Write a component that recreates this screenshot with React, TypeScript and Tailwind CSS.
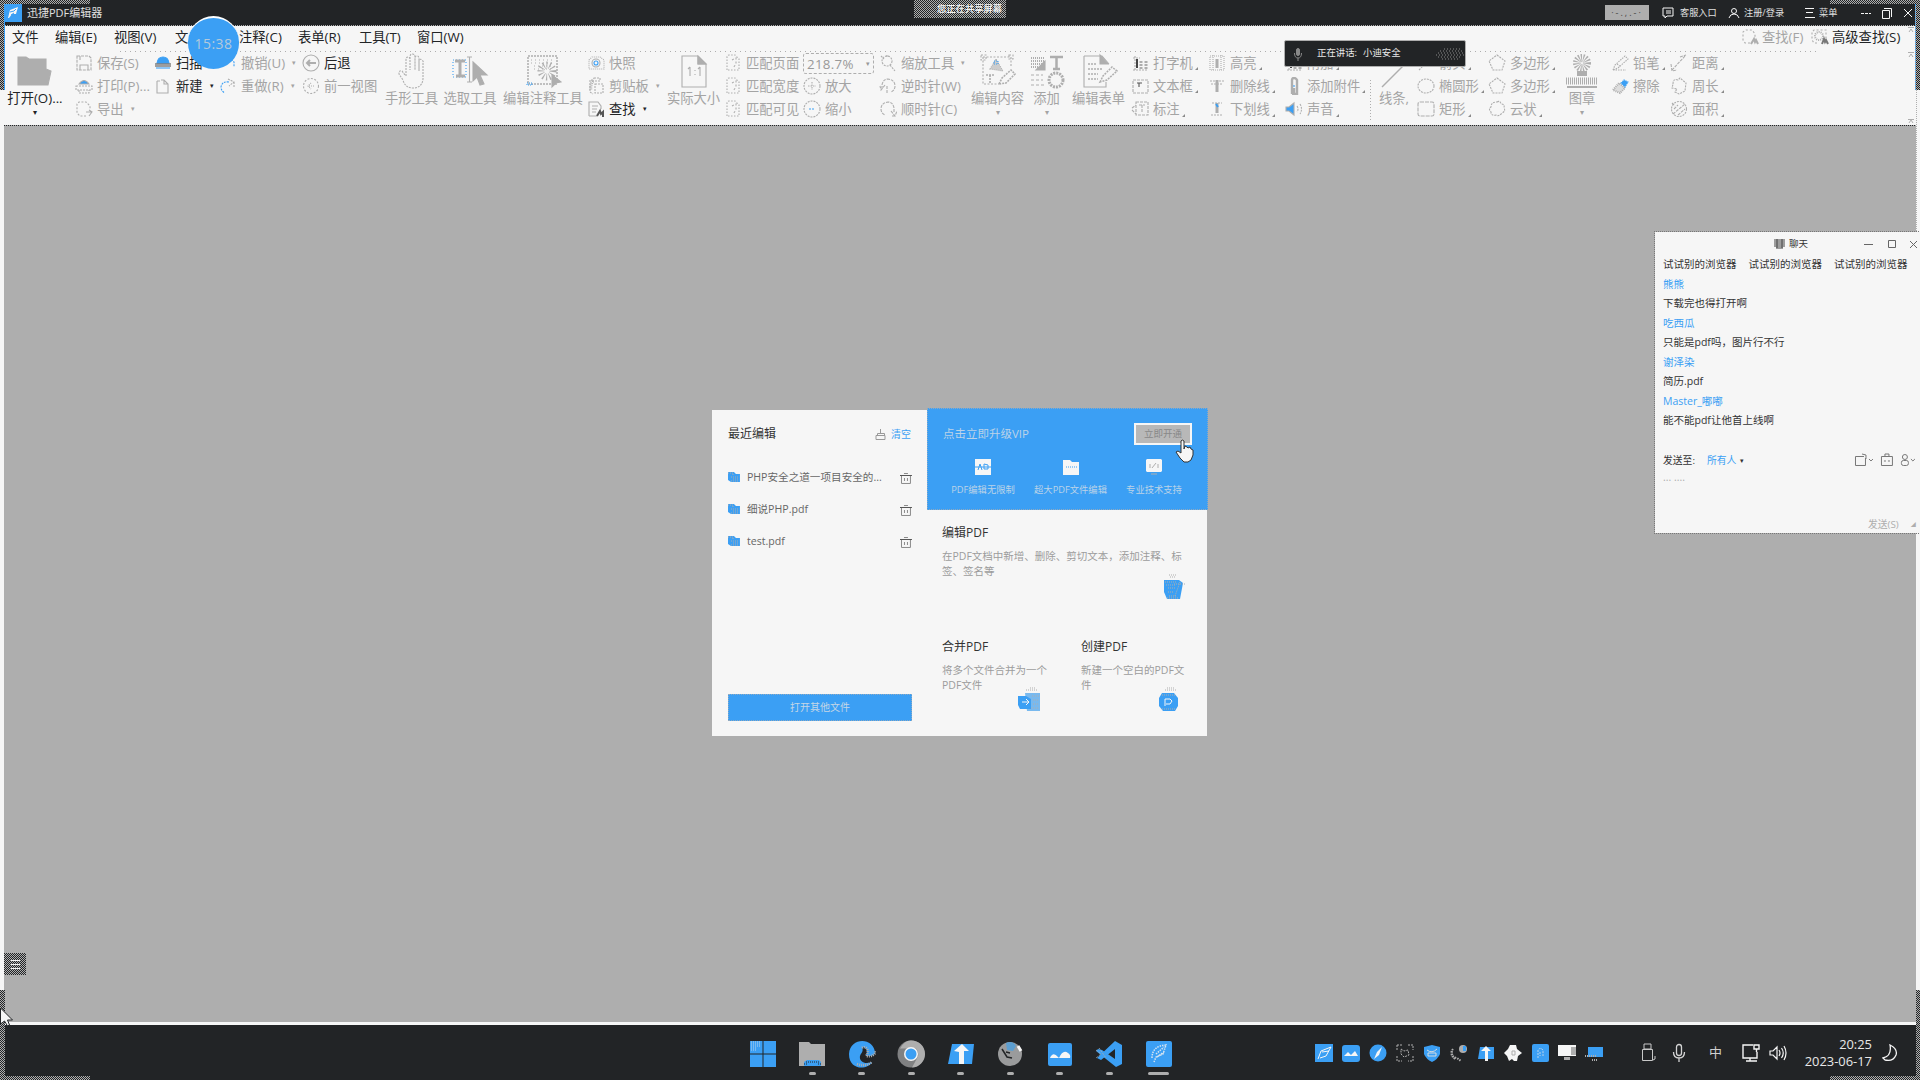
import type { ReactNode } from 'react';

const G = '#aeaeae';
const B = '#3b9ff4';
const D = '#222426';
const W = '#f6f6f6';

const CHECK = 'bg-[repeating-conic-gradient(#aeaeae_0_25%,#222426_0_50%)] bg-[length:2px_2px]';
const DOTS = 'bg-[repeating-linear-gradient(90deg,#222426_0_1px,#aeaeae_1px_2px)]';
const FAINT = 'bg-[repeating-linear-gradient(90deg,#aeaeae_0_1px,#f6f6f6_1px_5px)]';

const glyphs: Record<string, ReactNode> = {
  save: (<><path d="M2 2h12l2 2v12H2z" strokeDasharray="3 1" /><path d="M5 16v-5h8v5M5 2v4" /></>),
  print: (<><path d="M1 9h16v4H1zM4 13v3h10v-3" strokeDasharray="2 1" /><path d="M4 7q5-7 10 0z" fill={B} stroke={G} /></>),
  exp: (<><path d="M11 16H5l-3-3V4l2-2h7l4 4v3" strokeDasharray="2 1.5" /><path d="M11 12h6M14 10l3 2-3 4" /></>),
  scan: (<><path d="M3 9q1-6 6-6t6 6z" fill={B} stroke={B} /><path d="M1 10h16M1 12h16" stroke="#444" /><path d="M2 14h14" stroke={B} /></>),
  page: <path d="M3 4h3M3 4v12h11V7l-4-4H7M10 3v4h4" />,
  undo: <path d="M4 8q6-6 11 0v5M4 3v5h5" stroke={B} strokeDasharray="2 1" />,
  redo: (<><path d="M10 5q-7-1-8 5 0 4 4 6" strokeDasharray="2 1" stroke={B} /><path d="M9 2l6 3-5 4M15 5v5" strokeDasharray="2 1" /></>),
  back: (<><circle cx="9" cy="9" r="8" /><path d="M14 9H5M8 6L5 9l3 3" strokeWidth="2" /></>),
  prev: (<><circle cx="9" cy="9" r="7.5" strokeDasharray="2 1.5" /><path d="M12 9H6M9 6L6 9l3 3" strokeDasharray="1 1" /></>),
  camera: (<><path d="M2 6l3-3h8l4 3v9H2z" strokeDasharray="1 1" /><circle cx="9" cy="9" r="4" /><circle cx="9" cy="9" r="2" stroke={B} /></>),
  clip: (<><path d="M6 3H3v12l3 2M7 1h6v3H6zM8 7h8v9H8z" strokeDasharray="2 1" /><path d="M6 4q-3 4-2 9" strokeWidth="3" strokeDasharray="1 1" /></>),
  find: (<><path d="M2 16V2h9l3 4v3M5 6h6M5 9h5M5 12h4M2 16h8" /><path d="M10 16l3-5 1 3 2-2v5" stroke="#555" strokeWidth="2" /></>),
  pageSm: (<><path d="M3 16V3q0-2 2-2h6l4 4v11z" strokeDasharray="1.5 1.5" /><path d="M8 6l4-2v6l-3 4" strokeDasharray="2 2" /></>),
  plus: (<><circle cx="9" cy="9" r="8" strokeDasharray="2 1" /><path d="M5 9h8M9 5v8" strokeDasharray="1.5 1" /></>),
  minus: (<><circle cx="9" cy="9" r="8" strokeDasharray="2 1" /><path d="M6 9h6" stroke={B} strokeDasharray="2 1" /></>),
  zoom: (<><circle cx="8" cy="7" r="5" strokeDasharray="2 1" /><path d="M11 11l5 6M8 1v3M2 2l3 3" strokeDasharray="2 1" /></>),
  ccw: <path d="M3 12V8q1-6 6-6 7 1 7 7 0 4-4 6M6 8l-4 5-1-4M8 9v7" strokeDasharray="3 1" />,
  cw: <path d="M15 12V8q-1-6-6-6-7 1-7 7 0 4 4 6M12 11l4 5 2-5M13 16h4" strokeDasharray="3 1" />,
  type: (<><path d="M4 2v14M2 4h7M2 16h15" strokeDasharray="2 1" /><path d="M6 5v9" stroke="#444" strokeWidth="2" /><path d="M10 7v9M15 7v9" strokeWidth="3" strokeDasharray="2 1" /></>),
  textbox: (<><path d="M2 3h15v13H2z" strokeDasharray="3 1" /><path d="M6 6h5M8 6v4" stroke="#555" /></>),
  callout: <path d="M5 2h12v13H5zM1 8l4-3M1 10l4 4M8 5h6M11 5v7" strokeDasharray="3 1" />,
  high: (<><path d="M2 2h14v14H2zM5 1v16M13 1v16" strokeDasharray="1 1" /><path d="M9 5v9" stroke={G} strokeWidth="3" /></>),
  strike: (<><path d="M2 4h14M3 7h12" strokeDasharray="2 1" /><path d="M9 3v12" strokeWidth="3" /></>),
  under: (<><path d="M4 3h10M3 15h12" strokeDasharray="2 1" /><path d="M9 3v10" strokeWidth="3" /><path d="M8 4l2 3" stroke={B} strokeWidth="2" /></>),
  attach: (<><path d="M7 17V3q0-2 2-2t3 2v14H7M9 11v5" strokeWidth="2.4" /><path d="M9 8v2" stroke={B} /></>),
  sound: (<><path d="M1 7h3l5-4v12l-5-4H1z" fill={B} stroke={G} /><path d="M12 6q2 3 0 6M15 4q3 5 0 10" strokeDasharray="2 1" /></>),
  arrow: <path d="M2 16L15 3M10 3h5v5" strokeDasharray="2 1" />,
  ellipse: <ellipse cx="9" cy="9" rx="8" ry="7" strokeDasharray="2 1" />,
  rect: <rect x="1" y="2" width="16" height="14" rx="2" strokeDasharray="4 1" />,
  poly: <path d="M9 1l8 6-3 9H5L1 7z" strokeDasharray="2 1" />,
  cloud: <path d="M9 2q3-2 4 2 4 0 3 4 2 3-2 5-3 4-6 2-5 1-5-3-3-3 0-5 0-5 6-5z" strokeDasharray="2 1" />,
  pencil: <path d="M2 16l2-5L14 2l3 3L7 14zM2 16h13M6 10l4 3" strokeDasharray="1.5 1" />,
  erase: (<><path d="M2 13l6-7 6 5-5 5z" strokeDasharray="1 1" strokeWidth="2" fill="#ddd" /><path d="M10 6l3-3 4 2-3 5z" fill={B} stroke={B} strokeDasharray="1 1" /></>),
  dist: <path d="M2 16L15 2M10 3l6-2M1 10l1 7 5-1" strokeDasharray="3 1" />,
  perim: <path d="M3 7q0-6 5-4l2-2 6 5-1 8-6 3-4-2 2-3-5-1z" strokeDasharray="2 1" />,
  area: (<><circle cx="9" cy="9" r="7.5" strokeDasharray="2 1" /><path d="M3 14L15 4M4 9l4-4M8 15l7-6M2 3l3 3" strokeDasharray="3 1" /></>),
  search: (<><path d="M9 15H4l-2-3V4l3-2h6l3 4v4" strokeDasharray="2 2" /><path d="M10 16l3-5 1 3 1-2 2 4" strokeWidth="2" /></>),
  search2: (<><path d="M6 15H3l-2-3V4l2-2h12v8" strokeDasharray="2 2" /><circle cx="8" cy="8" r="4" strokeWidth="2" strokeDasharray="1 1" /><path d="M11 16l2-5 1 3 1-2 2 4" strokeWidth="2" stroke="#777" /></>),
};

function Icon({ n }: { n: string }) {
  return (
    <svg viewBox="0 0 18 18" className="h-[18px] w-[18px] shrink-0" fill="none" stroke={G} strokeWidth="1.1">
      {glyphs[n]}
    </svg>
  );
}

type Row = { i: string; t: string; on?: boolean; m?: string; c?: boolean };

function Column({ w, rows }: { w: string; rows: (Row | null)[] }) {
  return (
    <div className={`flex shrink-0 flex-col ${w}`}>
      {rows.map((r, k) =>
        r ? (
          <div key={k} className={`flex h-[23.3px] items-center whitespace-nowrap ${r.on ? 'text-[#222426]' : 'text-[#a4a4a4]'}`}>
            <Icon n={r.i} />
            <span className="ml-[4px]">{r.t}</span>
            {r.m && <span className={r.m}>▾</span>}
            {r.c && <i className="mt-[12px] ml-[2px] h-0 w-0 border-b-[3px] border-l-[3px] border-b-[#8a8a8a] border-l-transparent" />}
          </div>
        ) : (
          <div key={k} className="h-[23.3px]" />
        ),
      )}
    </div>
  );
}

function Big({ w, label, on, caret, children }: { w: string; label: string; on?: boolean; caret?: boolean; children: ReactNode }) {
  return (
    <div className={`flex shrink-0 flex-col items-center pt-[1px] whitespace-nowrap ${w} ${on ? 'text-[#222426]' : 'text-[#a4a4a4]'}`}>
      <svg viewBox="0 0 38 38" className="h-[38px] w-[38px]" fill="none" stroke={G} strokeWidth="1.1">
        {children}
      </svg>
      <span className="mt-[-1px] h-[18px] leading-[18px]">{label}</span>
      {caret && <span className="mt-[-1px] text-[8px] leading-[12px]">▾</span>}
    </div>
  );
}

const dd = 'ml-[7px] text-[7px]';

function Ribbon() {
  return (
    <div className="-mt-[1px] flex h-[73px] text-[13.3px] leading-[18px]">
      <Big w="w-[70px]" label="打开(O)..." on caret>
        <path d="M2 5h8l3 2h17v10l5 2-3 14H2z" fill={G} />
      </Big>
      <Column w="ml-[5px] w-[79px]" rows={[{ i: 'save', t: '保存(S)' }, { i: 'print', t: '打印(P)...' }, { i: 'exp', t: '导出', m: dd }]} />
      <Column w="w-[65px]" rows={[{ i: 'scan', t: '扫描', on: true }, { i: 'page', t: '新建', on: true, m: dd }]} />
      <Column w="w-[83px]" rows={[{ i: 'undo', t: '撤销(U)', m: dd }, { i: 'redo', t: '重做(R)', m: dd }]} />
      <Column w="w-[80px]" rows={[{ i: 'back', t: '后退', on: true }, { i: 'prev', t: '前一视图' }]} />
      <Big w="w-[59px]" label="手形工具">
        <path d="M13 24V8q0-3 2-3t2 3v10V5q0-3 2.500-3T22 5v13V6q0-2 2-2t2 3v12V9q1-3 3-1t1 3v16q-1 9-10 9-8 0-10-8l-4-6q0-4 3-3l3 4" strokeDasharray="2 1" />
      </Big>
      <Big w="w-[58px]" label="选取工具">
        <path d="M2 8h13v17H2z" stroke={B} strokeDasharray="1 2" />
        <path d="M4 9h10M9 9v15M5 24h9" strokeWidth="3" />
        <path d="M16 5h5M16 30h5M18.500 5v25" />
        <path d="M22 10l14 13h-7l4 9-4 1-3-8-4 4z" fill={G} />
      </Big>
      <Big w="w-[88px]" label="编辑注释工具">
        <path d="M4 4h29v28H4z" strokeDasharray="2 1" strokeWidth="1.500" />
        <path d="M7 8h22M7 11h22M10 14h19M10 17h19" strokeDasharray="1 3" />
        <circle cx="23" cy="19" r="6" strokeWidth="7" strokeDasharray="1 2" />
        <path d="M28 23l9 7-5 1-4 4z" fill={G} />
        <path d="M3 31h5v2H3z" stroke={B} strokeDasharray="1 1" />
      </Big>
      <Column w="w-[76px]" rows={[{ i: 'camera', t: '快照' }, { i: 'clip', t: '剪贴板', m: dd }, { i: 'find', t: '查找', on: true, m: dd }]} />
      <Big w="w-[61px]" label="实际大小">
        <path d="M7 4h16l8 8v23H7zM23 4v8h8M15 15v9M13 17l2-2M25 15v9M23 17l2-2" />
        <path d="M23 4v8h8z" fill={G} />
        <path d="M20 18v1M20 22v1" />
      </Big>
      <Column w="w-[79px]" rows={[{ i: 'pageSm', t: '匹配页面' }, { i: 'pageSm', t: '匹配宽度' }, { i: 'pageSm', t: '匹配可见' }]} />
      <div className="flex w-[76px] shrink-0 flex-col">
        <div className="mt-[2px] flex h-[21px] w-[71px] items-center justify-between rounded-[3px] border border-dashed border-[#aeaeae] px-[3px] text-[13.3px] tracking-[0.3px] text-[#999]">
          218.7%<span className="text-[7px]">▾</span>
        </div>
        <Column w="w-[70px]" rows={[{ i: 'plus', t: '放大' }, { i: 'minus', t: '缩小' }]} />
      </div>
      <Column w="w-[89px]" rows={[{ i: 'zoom', t: '缩放工具', m: dd }, { i: 'ccw', t: '逆时针(W)' }, { i: 'cw', t: '顺时针(C)' }]} />
      <Big w="w-[59px]" label="编辑内容" caret>
        <path d="M4 5h28v10M4 5v27h16M2 3h5v5H2zM30 3h4v4h-4z" strokeDasharray="2 1.500" />
        <path d="M11 17l6-10 7 12z" fill="#ccc" strokeDasharray="1 1" />
        <path d="M15 9h4v3h-4z" stroke={B} strokeDasharray="1 1" />
        <path d="M7 23h9M11 23v9M20 32l3-6 9-8 4 4-9 9z" strokeWidth="1.600" strokeDasharray="2 1" />
      </Big>
      <Big w="w-[39px]" label="添加" caret>
        <path d="M3 6h14M3 9h14M3 12h14M3 15h14" strokeWidth="2" strokeDasharray="1 1" />
        <path d="M8 18l9-9v9z" fill={G} />
        <path d="M22 5h13M28.500 5v12M25 17h7" strokeWidth="2.500" />
        <path d="M3 23h12M3 28h12M3 33h14" strokeDasharray="3 2" />
        <circle cx="28" cy="28" r="7" strokeWidth="3" strokeDasharray="2 1" />
      </Big>
      <Big w="w-[65px]" label="编辑表单">
        <path d="M4 4h18l7 8M4 4v31h22v-5" />
        <path d="M20 3v9h8z" fill={G} />
        <path d="M8 12h9M8 17h15M8 22h10M8 27h10M20 30l3-6 9-9 5 4-10 9z" strokeDasharray="2 1" strokeWidth="1.500" />
      </Big>
      <Column w="w-[77px]" rows={[{ i: 'type', t: '打字机', c: true }, { i: 'textbox', t: '文本框', c: true }, { i: 'callout', t: '标注', c: true }]} />
      <Column w="w-[77px]" rows={[{ i: 'high', t: '高亮', c: true }, { i: 'strike', t: '删除线', c: true }, { i: 'under', t: '下划线', c: true }]} />
      <Column w="w-[85px]" rows={[{ i: 'type', t: '附加', c: true }, { i: 'attach', t: '添加附件', c: true }, { i: 'sound', t: '声音', c: true }]} />
      <div className="mt-[29px] h-[41px] w-px shrink-0 bg-[repeating-linear-gradient(180deg,#aeaeae_0_1px,#f6f6f6_1px_3px)]" />
      <Big w="w-[46px]" label="线条,">
        <path d="M7 35L30 12" strokeWidth="1.400" />
      </Big>
      <Column w="w-[71px]" rows={[{ i: 'arrow', t: '箭头', c: true }, { i: 'ellipse', t: '椭圆形', c: true }, { i: 'rect', t: '矩形', c: true }]} />
      <Column w="w-[75px]" rows={[{ i: 'poly', t: '多边形', c: true }, { i: 'poly', t: '多边形', c: true }, { i: 'cloud', t: '云状', c: true }]} />
      <Big w="w-[38px]" label="图章" caret>
        <circle cx="19" cy="11" r="5" strokeWidth="8" strokeDasharray="1 1" />
        <path d="M19 19v5" strokeWidth="10" />
        <path d="M3 29h32" strokeWidth="7" strokeDasharray="1 1" />
        <path d="M4 35h30" strokeWidth="2" />
      </Big>
      <div className="w-[10px] shrink-0" />
      <Column w="w-[59px]" rows={[{ i: 'pencil', t: '铅笔', c: true }, { i: 'erase', t: '擦除' }]} />
      <Column w="w-[80px]" rows={[{ i: 'dist', t: '距离', c: true }, { i: 'perim', t: '周长', c: true }, { i: 'area', t: '面积', c: true }]} />
    </div>
  );
}

const menus = [
  { t: '文件', w: 'w-[43px]' },
  { t: '编辑(E)', w: 'w-[59px]' },
  { t: '视图(V)', w: 'w-[61px]' },
  { t: '文', w: 'w-[64px]' },
  { t: '注释(C)', w: 'w-[59px]' },
  { t: '表单(R)', w: 'w-[61px]' },
  { t: '工具(T)', w: 'w-[58px]' },
  { t: '窗口(W)', w: 'w-[60px]' },
];

function TitleBar() {
  return (
    <header className="flex h-[25px] shrink-0 items-center bg-[#222426] pl-[4px] text-[11px] leading-[16px] text-[#e0e0e0]">
      <svg viewBox="0 0 18 18" className="h-[18px] w-[18px]">
        <rect width="18" height="18" fill={B} />
        <path d="M4 14l2-8 8-3-2 7H8l-3 4z" fill={W} />
        <path d="M6 8l4-1 2-2M7 11l3-2" stroke={B} fill="none" />
      </svg>
      <span className="ml-[5px] w-[1578px]">迅捷PDF编辑器</span>
      <span className="h-[15px] w-[44px] bg-[#aeaeae] text-center text-[9px] leading-[15px] tracking-[2px] text-[#444]">·-.,.-·</span>
      <svg viewBox="0 0 12 12" className="ml-[13px] h-[12px] w-[12px]" fill="none" stroke={W}>
        <path d="M1 1h10v8H5l-2 2V9H1zM4 4h5M4 6h5" />
      </svg>
      <span className="ml-[6px] w-[48px] whitespace-nowrap text-[9.2px]">客服入口</span>
      <svg viewBox="0 0 12 12" className="h-[12px] w-[12px]" fill="none" stroke={W}>
        <circle cx="6" cy="4" r="2.500" />
        <path d="M1 11q1-4 5-4t5 4" />
      </svg>
      <span className="ml-[4px] w-[60px] whitespace-nowrap text-[9.2px]">注册/登录</span>
      <svg viewBox="0 0 12 12" className="h-[12px] w-[12px]" fill="none" stroke={W}>
        <path d="M1 1.500h9M2 5.500h7M1 10.500h10" />
      </svg>
      <span className="ml-[3px] w-[40px] text-[9.2px]">菜单</span>
      <svg viewBox="0 0 58 14" className="h-[14px] w-[58px]" fill="none" stroke={W}>
        <path d="M2 7.500h10" strokeDasharray="3 1" />
        <path d="M23.500 4.500h7v8h-7zM25 2.500h7.500V11M45 3l8 8M53 3l-8 8" />
      </svg>
    </header>
  );
}

function MenuBar() {
  return (
    <nav className="flex h-[25px] items-center pb-[3px] pl-[12px] text-[13.3px] leading-[18px] text-[#222426]">
      {menus.map((m) => (
        <span key={m.t} className={`shrink-0 whitespace-nowrap ${m.w}`}>{m.t}</span>
      ))}
      <div className="ml-[1264px] flex shrink-0 items-center whitespace-nowrap">
        <Icon n="search" />
        <span className="ml-[3px] w-[49px] text-[#a4a4a4]">查找(F)</span>
        <Icon n="search2" />
        <span className="ml-[3px]">高级查找(S)</span>
      </div>
    </nav>
  );
}

function Trash() {
  return (
    <svg viewBox="0 0 12 12" className="h-[12px] w-[12px]" fill="none" stroke="#8a8a8a">
      <path d="M4 1.500h4M1.500 4v7.500h9V4M4.500 6v3M7.500 6v3" />
      <path d="M0 3.500h12" stroke="#555" />
    </svg>
  );
}

function RecentPanel() {
  return (
    <section className="flex w-[215px] flex-col pr-[15px] pl-[16px]">
      <div className="mt-[14px] flex h-[20px] items-center">
        <h2 className="w-[147px] text-[12px] leading-[20px] text-[#333]">最近编辑</h2>
        <svg viewBox="0 0 11 12" className="h-[12px] w-[11px]" fill="none" stroke="#999">
          <path d="M5.500 1v5M2.500 5.500h7v2h-7zM1 7.500h9v4H1z" />
        </svg>
        <span className="ml-[5px] text-[10px] text-[#3b9ff4]">清空</span>
      </div>
      <ul className="mt-[18px]">
        {['PHP安全之道一项目安全的...', '细说PHP.pdf', 'test.pdf'].map((f) => (
          <li key={f} className="flex h-[32px] items-center">
            <svg viewBox="0 0 12 12" className="h-[12px] w-[12px]">
              <path d="M0 0h6l2 2h4v8H3L0 8z" fill={B} />
              <path d="M0 1h5v2M3 5h8M5 7h6M3 9h8" stroke={G} strokeDasharray="1 1" fill="none" />
            </svg>
            <span className="ml-[7px] w-[154px] whitespace-nowrap text-[10.600px] text-[#666]">{f}</span>
            <Trash />
          </li>
        ))}
      </ul>
      <button className="mt-auto mb-[15px] h-[27px] w-[184px] border border-dotted border-[#8fa9c0] bg-[#3b9ff4] text-[10px] text-[#c4d6e6]">打开其他文件</button>
    </section>
  );
}

function Feature({ w, label, children }: { w: string; label: string; children: ReactNode }) {
  return (
    <div className={`flex shrink-0 flex-col items-center whitespace-nowrap text-[9.300px] leading-[12px] text-[#bcd3e8] ${w}`}>
      <svg viewBox="0 0 18 18" className="mb-[8px] h-[18px] w-[18px]">{children}</svg>
      {label}
    </div>
  );
}

function VipBanner() {
  return (
    <div className="relative -mt-[2px] h-[102px] w-[281px] border border-dotted border-[#8fa9c0] bg-[#3b9ff4]">
      <div className="mt-[14px] flex items-center pl-[15px]">
        <span className="w-[191px] text-[11.500px] leading-[16px] text-[#bcd3e8]">点击立即升级VIP</span>
        <span className="h-[22px] w-[58px] border-2 border-[#f6f6f6] bg-[#b8b8b8] text-center text-[9.500px] leading-[17px] text-[#888]">立即开通</span>
      </div>
      <div className="mt-[13px] flex pl-[16px]">
        <Feature w="w-[78px]" label="PDF编辑无限制">
          <path d="M1 1h16v16H1z" fill={W} />
          <path d="M1 9h16M4 12l2-6 2 6M10 6v5h4V7z" stroke={B} fill="none" />
        </Feature>
        <Feature w="w-[97px]" label="超大PDF文件编辑">
          <path d="M1 2h7l2 2h7v13H1z" fill={W} />
          <path d="M4 9h11" stroke={B} strokeDasharray="1 1" />
        </Feature>
        <Feature w="w-[70px]" label="专业技术支持">
          <path d="M2 1h14l1 1v11l-1 1H2l-1-1V2z" fill={W} />
          <path d="M5 6v4M7 10l4-5M13 6v4M6 16h6" stroke={G} />
        </Feature>
      </div>
      <svg viewBox="0 0 20 24" className="absolute top-[30px] left-[247px] h-[24px] w-[20px]" fill={W} stroke="#333">
        <path d="M6 14V2q1-2 3 0v8l1-3 2 1 1 1 2-1 1 2 2 1v5l-2 5-3 2H9l-4-4-4-6 2-1z" />
      </svg>
    </div>
  );
}

function Card({ w, title, text, tw, icon }: { w: string; title: string; text: string; tw: string; icon: ReactNode }) {
  return (
    <div className={`flex shrink-0 flex-col ${w}`}>
      <h3 className="text-[12px] leading-[18px] text-[#333]">{title}</h3>
      <p className={`mt-[7px] text-[10.500px] leading-[15.300px] text-[#9c9c9c] ${tw}`}>{text}</p>
      {icon}
    </div>
  );
}

function StartDialog() {
  return (
    <main className="flex h-[326px] w-[495px] shrink-0 bg-[#f6f6f6]">
      <RecentPanel />
      <section className="flex flex-col">
        <VipBanner />
        <div className="flex h-[116px] pt-[14px] pl-[15px]">
          <Card
            w="w-[250px]"
            tw="w-[245px]"
            title="编辑PDF"
            text="在PDF文档中新增、删除、剪切文本，添加注释、标签、签名等"
            icon={
              <svg viewBox="0 0 24 30" className="-mt-[8px] ml-[220px] h-[30px] w-[24px]">
                <path d="M2 8h15l4 3-3 16H5L2 20z" fill={B} />
                <path d="M7 3h8M8 5h6M12 12h11M18 10l-5 14M6 16h7M6 20h5M7 24h7M3 10h12M4 13h9M5 26h11" stroke={G} strokeDasharray="1 1" />
              </svg>
            }
          />
        </div>
        <div className="flex pt-[12px] pl-[15px]">
          <Card
            w="w-[139px]"
            tw="w-[108px]"
            title="合并PDF"
            text="将多个文件合并为一个PDF文件"
            icon={
              <svg viewBox="0 0 26 28" className="-mt-[9px] ml-[76px] h-[28px] w-[26px]">
                <path d="M7 8h15v18H9z" fill="#79b9ee" />
                <path d="M0 11h8l5 3v10H2l-2-4z" fill={B} />
                <path d="M4 17h6M8 14l3 3-3 3" stroke={W} fill="none" />
                <path d="M8 5h12M12 3h6M14 11h7M15 15h6M15 19h6M13 23h8" stroke={G} strokeDasharray="1 1" />
              </svg>
            }
          />
          <Card
            w="w-[115px]"
            tw="w-[106px]"
            title="创建PDF"
            text="新建一个空白的PDF文件"
            icon={
              <svg viewBox="0 0 26 28" className="-mt-[9px] ml-[76px] h-[28px] w-[26px]">
                <path d="M5 8h12l4 5v8l-3 5H6l-4-5v-8z" fill={B} />
                <path d="M8 21v-7h5l2 2-2 3H9" stroke={W} fill="none" />
                <path d="M8 5h12M10 3h8M5 24h14M5 10h13" stroke={G} strokeDasharray="1 1" />
              </svg>
            }
          />
        </div>
      </section>
    </main>
  );
}

const chat = [
  { t: '熊熊', n: true },
  { t: '下载完也得打开啊' },
  { t: '吃西瓜', n: true },
  { t: '只能是pdf吗，图片行不行' },
  { t: '谢泽染', n: true },
  { t: '简历.pdf' },
  { t: 'Master_嘟嘟', n: true },
  { t: '能不能pdf让他首上线啊' },
];

function Chat() {
  return (
    <aside className="absolute top-[232px] left-[1655px] flex h-[301px] w-[265px] flex-col overflow-hidden bg-[#f6f6f6] pl-[8px] text-[10.500px] leading-[19.500px] whitespace-nowrap text-[#333] outline outline-dotted outline-[#777]">
      <div className="flex h-[23px] shrink-0 items-center pl-[111px]">
        <svg viewBox="0 0 11 10" className="h-[10px] w-[11px]" stroke="#444" fill="none">
          <path d="M0 1h11M0 3h11M0 5h11M0 7h11M2 9h7M3 0v9M8 0v9" />
        </svg>
        <span className="ml-[4px] w-[75px] text-[9.500px]">聊天</span>
        <svg viewBox="0 0 54 10" className="h-[10px] w-[54px]" stroke="#666" fill="none">
          <path d="M0 5.500h9M24.500 1.500h7v7h-7zM46 2l7 7M53 2l-7 7" />
        </svg>
      </div>
      <div className="flex shrink-0 gap-[12px]">
        <span>试试别的浏览器</span>
        <span>试试别的浏览器</span>
        <span>试试别的浏览器</span>
      </div>
      {chat.map((c) => (
        <p key={c.t} className={`shrink-0 ${c.n ? 'text-[#3b9ff4]' : ''}`}>{c.t}</p>
      ))}
      <div className="mt-[20px] flex shrink-0 items-center text-[9.800px]">
        <span className="w-[44px]">发送至:</span>
        <span className="text-[#3b9ff4]">所有人</span>
        <span className="ml-[4px] w-[114px] text-[7px]">▾</span>
        <svg viewBox="0 0 66 14" className="h-[14px] w-[66px]" fill="none" stroke="#777">
          <path d="M10 3.500H1.500v9h10V5M8 1l4 1v4M15 6l2 2 2-2M27.500 3.500h11v9h-11zM31 3V1h4v2M30 8h2M34 8h2M57 6l2 2 2-2" />
          <circle cx="51" cy="4" r="2.500" />
          <rect x="47.500" y="7.500" width="7" height="5" rx="2" />
        </svg>
      </div>
      <span className="leading-[14px] text-[#aeaeae]">... ....</span>
      <div className="mt-auto flex h-[17px] items-center pl-[205px] text-[9.800px] text-[#aeaeae]">
        发送(S)<span className="ml-[12px] text-[5px]">◢</span>
      </div>
    </aside>
  );
}

const apps: { bar: string; d: ReactNode }[] = [
  { bar: '', d: (<><path d="M1 1h12.500v12.500H1zM14.500 1H27v12.500H14.500zM1 14.500h12.500V27H1zM14.500 14.500H27V27H14.500z" fill={B} /><path d="M2 2h10M2 4h9M2 6h9M2 8h6M2 10h5" stroke="#b9d4ec" strokeDasharray="1 1" /></>) },
  { bar: 'w-[7px]', d: (<><path d="M1 2h10l2 2h14v22H1z" fill={G} /><path d="M6 26v-4l3-2h12l2 2v4z" fill={B} /><path d="M8 22h14M6 24h3M20 24h3" stroke={D} strokeDasharray="1 1" /></>) },
  { bar: 'w-[7px]', d: (<><path d="M27 13C26-3 2-3 1 14c0 17 19 16 23 8-8 3-13-1-12-6 1-3 4-5 2-8 3-2 5 1 5 4l-1 3c3 2 8 1 9-2z" fill={B} /><path d="M14 8c4-3 8 3 4 8 5 1 10-1 9-5M9 24q9 3 15-2" stroke={G} strokeWidth="2.500" strokeDasharray="1 1" fill="none" /></>) },
  { bar: 'w-[7px]', d: (<><circle cx="14" cy="14" r="13.500" fill="#808182" /><path d="M14 .5A13.500 13.500 0 0 1 15 27.500l6-11q1-5-2-8H3Q8 0 14 .5" fill={G} /><circle cx="14" cy="14" r="7" fill={W} /><circle cx="14" cy="14" r="5.500" fill={B} /></>) },
  { bar: 'w-[7px]', d: (<><path d="M5 4h22l-2 20H1z" fill={B} /><path d="M7 11l8-7 7 7h-5v13h-5V12z" fill={W} /></>) },
  { bar: 'w-[7px]', d: (<><circle cx="14" cy="14" r="12" fill="#9a9b9c" /><path d="M10 3q7-3 10 3l-3 5-6-1z" fill="#5c9ed0" /><path d="M6 9l5 8 5 1M10 12l4 1" stroke={D} strokeWidth="1.500" fill="none" /><path d="M22 6l3 5" stroke={W} strokeWidth="3" /></>) },
  { bar: 'w-[7px]', d: (<><rect x="2" y="3" width="24" height="23" rx="2" fill={B} /><path d="M4 18q3-7 8-1l1 1q4-9 9-5 3 2 2 5z" fill={W} /></>) },
  { bar: 'w-[7px]', d: (<><path d="M20 1l7 4v19l-6 3L1 11l2-2 4 1 13 9V9L6 20l-4-2z" fill={B} /><path d="M1 10l5 4-5 4M4 8l7 10" stroke={G} strokeDasharray="1 1" fill="none" /></>) },
  { bar: 'w-[21px]', d: (<><rect x="1" y="1" width="26" height="26" rx="2" fill={B} /><path d="M7 18q0-12 14-13l-3 9-7 3-2 5M11 14l8-7M12 17l7-5" stroke="#d5e4f1" strokeWidth="1.500" strokeDasharray="1.500 1" fill="none" /></>) },
];

const tray: ReactNode[] = [
  (<><rect x="0" y="0" width="18" height="18" fill={B} /><path d="M3 15l3-8 10-4-5 9-6 2M7 8l7-1" stroke={W} fill="none" /></>),
  (<><rect x="0" y="1" width="18" height="17" rx="3" fill={B} /><path d="M2 12l4-4 3 3 4-4 3 5z" fill={W} /></>),
  (<><circle cx="9" cy="9" r="8.500" fill={B} /><path d="M5 15l3-7 5-5-3 8z" fill={W} /></>),
  (<><path d="M1 1h5M12 1h5v5M1 1v6M1 12v5h5M17 12v5h-5M5 5l3 2 4-1 1 5-5 2-3-3z" stroke={G} fill="none" strokeDasharray="2 1" /></>),
  (<><path d="M1 3l8-2 8 2v7q-2 5-8 8-6-3-8-8z" fill={B} /><path d="M4 6q5 4 10-1M5 9h8v3H5z" stroke="#d4dce2" fill="none" /></>),
  (<><path d="M2 7q-1 6 5 7l4 3M3 5q-4 5 2 10" stroke={G} strokeWidth="2" strokeDasharray="1.500 1" fill="none" /><circle cx="13" cy="5" r="4" fill={G} /><path d="M13 2h3v5h-3z" fill={B} /></>),
  (<><path d="M3 3h14v12H1z" fill={B} /><path d="M4 7l5-5 5 5h-3v10H8V7z" fill={W} /></>),
  (<><path d="M6 1h6l1 4 5 4-4 3-1 5h-3l-2-2-3 2-2-5-3-3 4-4z" fill={W} /><path d="M8 7h3v4H8z" stroke={G} fill="none" /></>),
  (<><rect x="1" y="0" width="17" height="18" rx="2" fill={B} /><path d="M7 14V6q2-3 5 0v6M9 8v4" stroke="#b9d4ec" fill="none" strokeDasharray="2 1" /></>),
  (<><path d="M0 1h18v11H0z" fill={W} /><path d="M13 3h5v8h-5zM6 13h6v3H6z" fill={G} /></>),
  (<><path d="M3 3h15v10H3z" fill={B} /><path d="M0 12h12M7 16h6" stroke={G} strokeWidth="2" strokeDasharray="1 1" /></>),
];

function Taskbar() {
  return (
    <footer className="flex h-[55px] shrink-0 bg-[#222426] text-[#e8e8e8]">
      <div className="flex pl-[738px]">
        {apps.map((a, k) => (
          <div key={k} className="flex w-[49.500px] flex-col items-center pt-[15px]">
            <svg viewBox="0 0 28 28" className="h-[28px] w-[28px]">{a.d}</svg>
            <span className={`mt-[4px] h-[3px] rounded-full bg-[#aeaeae] ${a.bar}`} />
          </div>
        ))}
      </div>
      <div className="flex h-[56px] items-center pl-[126.500px]">
        {tray.map((t, k) => (
          <div key={k} className="flex w-[27px] justify-center">
            <svg viewBox="0 0 18 18" className="h-[18px] w-[18px]">{t}</svg>
          </div>
        ))}
      </div>
      <div className="flex h-[56px] items-center pl-[32px]">
        <svg viewBox="0 0 18 20" className="h-[20px] w-[18px]" fill="none" stroke="#c9c9c9">
          <path d="M5 1h7v5H5zM3.500 6.500h10v11h-10zM14 17q3 0 2-4" />
        </svg>
        <svg viewBox="0 0 14 20" className="ml-[15px] h-[20px] w-[14px]" fill="none" stroke="#d4d4d4" strokeWidth="1.300">
          <rect x="4.500" y="1.500" width="5" height="11" rx="2.500" />
          <path d="M1.500 9q0 6 5.500 6t5.500-6M7 15v4" />
        </svg>
        <span className="ml-[23px] w-[22px] text-[13px] text-[#d0d0d0]">中</span>
        <svg viewBox="0 0 20 20" className="ml-[10px] h-[20px] w-[20px]" fill="none" stroke={W} strokeWidth="1.400">
          <path d="M12 2H2v13h14V9M9 15v3M5 18h11M13 2h5v4h-5zM15.500 6v3" />
        </svg>
        <svg viewBox="0 0 18 18" className="ml-[8px] h-[18px] w-[18px]" fill="none" stroke={W} strokeWidth="1.200">
          <path d="M1 7h3l4-4v12l-4-4H1zM10 6q2 3 0 6M12.500 4q3.500 5 0 10M15 2q4 7 0 14" />
        </svg>
        <div className="ml-[8px] flex w-[77px] flex-col text-right text-[12.900px] leading-[17.500px]">
          <span>20:25</span>
          <span>2023-06-17</span>
        </div>
        <svg viewBox="0 0 16 18" className="ml-[10px] h-[18px] w-[16px]" fill="none" stroke={W} strokeWidth="1.300">
          <path d="M8 1q8 4 6 10-3 7-11 5l-2-2q9-2 7-13z" />
        </svg>
      </div>
    </footer>
  );
}

function Overlays() {
  return (
    <>
      <div className={`absolute top-0 left-0 h-[4px] w-[90px] ${CHECK}`} />
      <div className={`absolute top-0 left-0 h-[90px] w-[4px] ${CHECK}`} />
      <div className="absolute top-[22px] left-[4px] h-[68px] w-px bg-[#3b9ff4]" />
      <div className={`absolute top-0 left-[1830px] h-[4px] w-[90px] ${CHECK}`} />
      <div className={`absolute top-[4px] left-[1915px] h-[86px] w-[5px] border-l border-dotted border-[#3b9ff4] ${CHECK}`} />
      <div className="absolute top-[90px] left-[1916px] h-[142px] w-px bg-[repeating-linear-gradient(180deg,#aeaeae_0_1px,#f6f6f6_1px_2px)]" />
      <svg viewBox="0 0 6 96" className="absolute top-[27px] left-[1908px] h-[96px] w-[6px]" fill="none" stroke={G}>
        <path d="M0 .5h6M1 5l2-3 2 3M0 25.500h6M1 30l2-3 2 3M0 92.500h6M1 96l2-3 2 3" />
      </svg>
      <div className={`absolute top-[990px] left-0 h-[90px] w-[5px] ${CHECK}`} />
      <div className={`absolute top-[1076px] left-0 h-[4px] w-[90px] ${CHECK}`} />
      <div className={`absolute top-[990px] left-[1916px] h-[90px] w-[4px] ${CHECK}`} />
      <div className={`absolute top-[1076px] left-[1830px] h-[4px] w-[90px] ${CHECK}`} />

      <div className={`absolute top-0 left-[914px] flex h-[18px] w-[92px] items-center pl-[23px] text-[9.300px] leading-[18px] font-medium whitespace-nowrap text-[#f6f6f6] ${CHECK}`}>
        您正在共享屏幕
      </div>

      <div className="absolute top-[16px] left-[188px] flex h-[53px] w-[51px] items-center justify-center rounded-full border-t-[2px] border-white bg-[#3b9ff4] text-[14px] tracking-[0.500px] text-[#b4c9db]">
        15:38
      </div>

      <div className="absolute top-[40px] left-[1284px] flex h-[27px] w-[182px] items-center rounded-[2px] border border-[#aeaeae] bg-[#222426] pl-[8px] text-[9.400px] whitespace-nowrap text-[#e8e8e8]">
        <svg viewBox="0 0 10 14" className="h-[14px] w-[10px]" fill="#888" stroke="#888">
          <rect x="3.500" y="1.500" width="3" height="7" rx="1.500" />
          <path d="M1.500 6q0 5 3.500 5t3.500-5M5 11v3" fill="none" />
        </svg>
        <span className="ml-[14px] w-[46px]">正在讲话:</span>
        <span className="w-[71px]">小迪安全</span>
        <svg viewBox="0 0 30 14" className="h-[14px] w-[30px]" stroke="#888" strokeDasharray="1 2" fill="none">
          <path d="M10 2h18M6 4h24M4 6h26M2 8h28M4 10h24M8 12h16" />
        </svg>
      </div>

      <Chat />

      <div className={`absolute top-[953px] left-[4px] flex h-[22px] w-[22px] flex-col items-center justify-center gap-[3px] ${CHECK}`}>
        <i className="h-px w-[9px] bg-[#f6f6f6]" />
        <i className="h-px w-[9px] bg-[#f6f6f6]" />
        <i className="h-px w-[9px] bg-[#f6f6f6]" />
      </div>

      <svg viewBox="0 0 13 18" className="absolute top-[1008px] left-0 h-[18px] w-[13px]" fill={W} stroke={D}>
        <path d="M.5 0v16l4-3 3 5 2-1-2-5h5z" />
      </svg>
    </>
  );
}

export default function App() {
  return (
    <div className="relative flex h-[1080px] w-[1920px] flex-col overflow-hidden bg-[#f6f6f6] font-['Open_Sans','Noto_Sans_CJK_SC',sans-serif]">
      <TitleBar />
      <div className={`h-px shrink-0 ${DOTS}`} />
      <div className="h-[99px] shrink-0">
        <MenuBar />
        <div className={`ml-[120px] h-px w-[1700px] ${FAINT}`} />
        <Ribbon />
      </div>
      <div className={`mx-[4px] h-px shrink-0 ${DOTS}`} />
      <div className="mx-[4px] flex min-h-0 flex-1 justify-center bg-[#aeaeae] pt-[284px] pr-[1px]">
        <StartDialog />
      </div>
      <div className="h-[3px] shrink-0 bg-[#f6f6f6]" />
      <Taskbar />
      <Overlays />
    </div>
  );
}
